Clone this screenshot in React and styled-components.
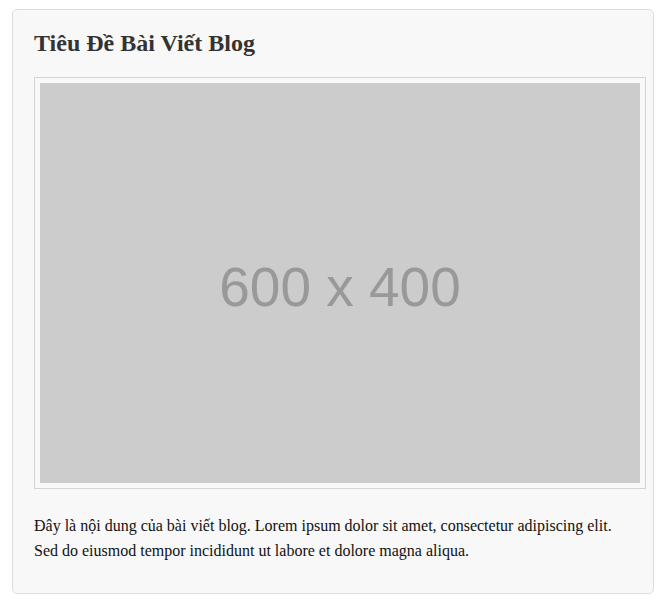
import React from "react";
import styled, { createGlobalStyle } from "styled-components";

const Global = createGlobalStyle`
  html, body { margin: 0; padding: 0; background: #fff; }
  body { font-family: "Liberation Serif", "Times New Roman", serif; }
`;

const Page = styled.div`
  padding: 9px 10px 0 12px;
`;

const Card = styled.article`
  background: #f8f8f8;
  border: 1px solid #dddddd;
  border-radius: 5px;
  padding: 20px 20px 20px 21px;
`;

const Title = styled.h2`
  margin: 0 0 19px;
  font-size: 24px;
  font-weight: bold;
  color: #333;
  line-height: 1.15;
`;

const Frame = styled.div`
  width: 600px;
  padding: 5px;
  border: 1px solid #d4d4d4;
`;

const Placeholder = styled.div`
  width: 600px;
  height: 400px;
  background: #cccccc;
  display: flex;
  align-items: center;
  justify-content: center;
  padding-top: 8px;
  box-sizing: border-box;
  font-family: "Liberation Sans", Arial, sans-serif;
  font-size: 55px;
  color: #999999;
`;

const Body = styled.p`
  margin: 24px 0 9px;
  font-size: 16px;
  line-height: 1.6;
  color: #111;
`;

export default function App() {
  return (
    <>
      <Global />
      <Page>
        <Card>
          <Title>Tiêu Đề Bài Viết Blog</Title>
          <Frame>
            <Placeholder>600 x 400</Placeholder>
          </Frame>
          <Body>
            Đây là nội dung của bài viết blog. Lorem ipsum dolor sit amet, consectetur adipiscing elit.
            Sed do eiusmod tempor incididunt ut labore et dolore magna aliqua.
          </Body>
        </Card>
      </Page>
    </>
  );
}
